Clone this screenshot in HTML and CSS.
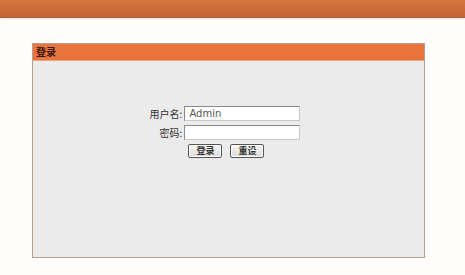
FILE: index.html
```html
<!DOCTYPE html>
<html lang="zh-CN">
<head>
    <meta charset="UTF-8">
    <title>登录</title>
    <link rel="stylesheet" href="styles.css">
</head>
<body>
    <div class="topbar"></div>
    <div class="login-box">
        <div class="login-title">登录</div>
        <div class="login-body">
            <form class="login-form" onsubmit="return false;">
                <label for="username">用户名:</label>
                <input type="text" id="username" value="Admin">
                <label for="password">密码:</label>
                <input type="password" id="password">
                <span></span>
                <div class="buttons">
                    <button type="submit">登录</button>
                    <button type="reset">重设</button>
                </div>
            </form>
        </div>
    </div>
</body>
</html>
```

FILE: styles.css
```css
body {
    margin: 0;
    background: #fffdfb;
    font-family: "Liberation Sans", "Noto Sans CJK SC", sans-serif;
    font-size: 11px;
    color: #222;
}
.topbar {
    height: 17px;
    background: linear-gradient(#d4763c, #c4633a);
    border-bottom: 1px solid #9a6250;
    box-shadow: 0 1px 2px #f3d9c8;
}
.login-box {
    width: 391px;
    margin: 25px 0 0 32px;
    border: 1px solid #b99c92;
    background: #ebebeb;
}
.login-title {
    height: 16px;
    line-height: 15px;
    padding-left: 3px;
    background: #e8733c;
    border-bottom: 1px solid #e9a57f;
    font-family: "Noto Sans CJK SC", sans-serif;
    font-weight: bold;
    font-size: 10px;
    color: #3a1a10;
}
.login-body {
    height: 196px;
    padding-top: 45px;
    box-sizing: border-box;
}
.login-form {
    display: grid;
    grid-template-columns: auto 116px;
    column-gap: 2px;
    row-gap: 4px;
    justify-content: center;
    align-items: center;
    margin-left: -7px;
}
.login-form label {
    text-align: right;
    font-family: "Noto Sans CJK SC", sans-serif;
    font-size: 10px;
    color: #333;
}
.login-form input {
    height: 15px;
    padding: 0 4px;
    box-sizing: border-box;
    border: 1px solid #8a8a8a;
    border-right-color: #c8c8c8;
    border-bottom-color: #c8c8c8;
    background: #fff;
    font-family: "DejaVu Sans", sans-serif;
    font-size: 10px;
    color: #555;
    height: 15px;
}
.buttons {
    display: flex;
    gap: 8px;
    padding-left: 4px;
    margin-top: 0;
}
.buttons button {
    width: 34px;
    height: 14px;
    padding: 0;
    border: 1px solid #555;
    border-radius: 2px;
    background: linear-gradient(#f6f6f4, #dcdcd6);
    box-shadow: inset 0 0 0 1px #fff;
    font-family: "Noto Sans CJK SC", sans-serif;
    font-size: 9px;
    font-weight: bold;
    line-height: 12px;
    color: #333;
}
```
